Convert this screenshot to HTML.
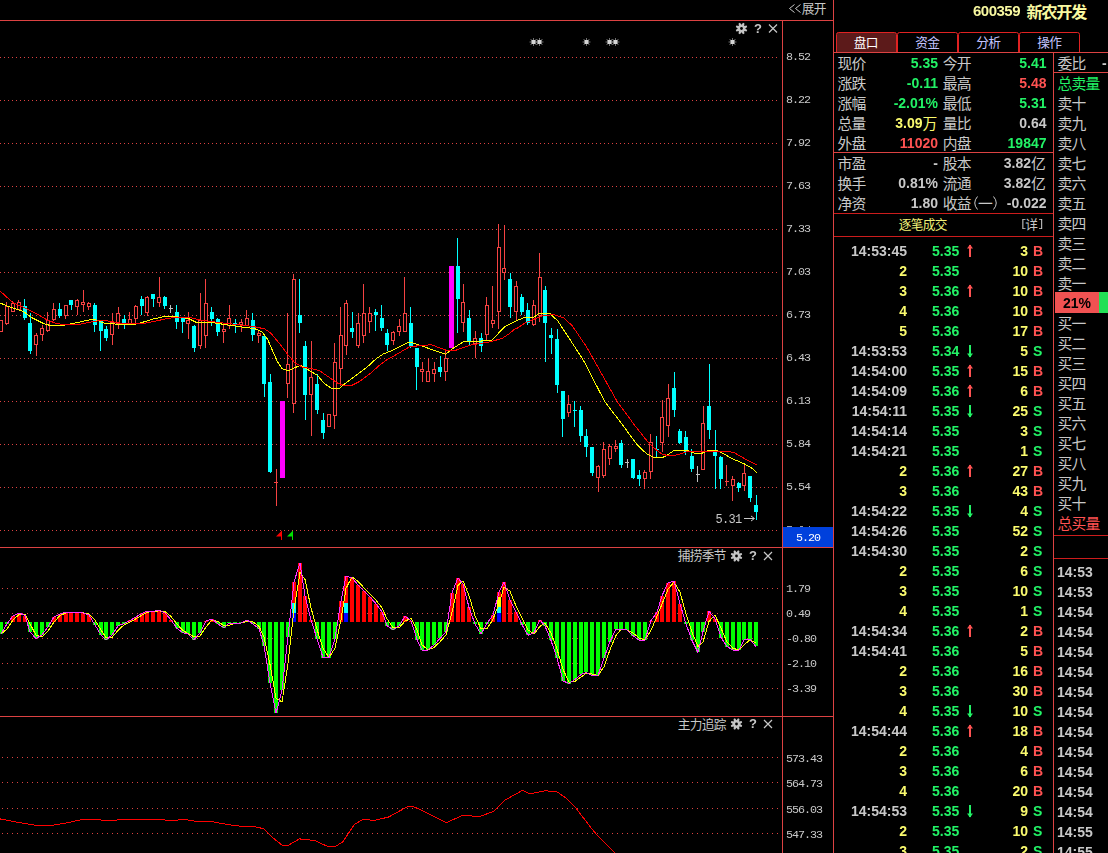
<!DOCTYPE html>
<html lang="zh"><head><meta charset="utf-8"><title>600359 新农开发</title>
<style>
html,body{margin:0;padding:0;background:#000;}
body{width:1108px;height:853px;overflow:hidden;position:relative;font-family:"Liberation Sans",sans-serif;}
#g{position:absolute;left:0;top:0;}
#g text{font-family:"Liberation Sans","Noto Sans CJK SC",sans-serif;}
.b{position:absolute;font:bold 14px/16px "Liberation Sans",sans-serif;white-space:nowrap;}
.m{position:absolute;font:11.7px/12px "Liberation Mono",monospace;letter-spacing:-1.02px;white-space:nowrap;color:#c8c8c8;}
#t{position:absolute;left:0;top:0;width:1108px;height:853px;will-change:transform;}
.r{text-align:right;}
.z{position:absolute;color:transparent;white-space:nowrap;overflow:hidden;font-family:"Liberation Sans",sans-serif;}
</style></head><body>
<svg id="g" width="1108" height="853" viewBox="0 0 1108 853">
<g shape-rendering="crispEdges">
<rect x="0" y="20" width="834" height="1" fill="#dc4242"/><rect x="782" y="20" width="1" height="833" fill="#dc4242"/><rect x="833" y="0" width="1" height="853" fill="#dc4242"/><rect x="0" y="547" width="834" height="1" fill="#dc4242"/><rect x="0" y="716" width="834" height="1" fill="#dc4242"/><rect x="833" y="52" width="275" height="1" fill="#dc4242"/><rect x="1053" y="52" width="1" height="801" fill="#dc4242"/><rect x="1053" y="72" width="55" height="1" fill="#dc4242"/><rect x="833" y="152" width="221" height="1" fill="#dc4242"/><rect x="834" y="213" width="219" height="1" fill="#cc1c1c"/><rect x="834" y="236" width="219" height="1" fill="#cc1c1c"/><rect x="1054" y="535" width="54" height="1" fill="#cc1c1c"/><rect x="1054" y="558" width="54" height="1" fill="#cc1c1c"/><path d="M0 57.5H777" stroke="#dc4242" stroke-width="1" stroke-dasharray="1 3" fill="none"/><path d="M0 100.5H777" stroke="#dc4242" stroke-width="1" stroke-dasharray="1 3" fill="none"/><path d="M0 143.5H777" stroke="#dc4242" stroke-width="1" stroke-dasharray="1 3" fill="none"/><path d="M0 186.5H777" stroke="#dc4242" stroke-width="1" stroke-dasharray="1 3" fill="none"/><path d="M0 229.5H777" stroke="#dc4242" stroke-width="1" stroke-dasharray="1 3" fill="none"/><path d="M0 272.5H777" stroke="#dc4242" stroke-width="1" stroke-dasharray="1 3" fill="none"/><path d="M0 315.5H777" stroke="#dc4242" stroke-width="1" stroke-dasharray="1 3" fill="none"/><path d="M0 358.5H777" stroke="#dc4242" stroke-width="1" stroke-dasharray="1 3" fill="none"/><path d="M0 401.5H777" stroke="#dc4242" stroke-width="1" stroke-dasharray="1 3" fill="none"/><path d="M0 444.5H777" stroke="#dc4242" stroke-width="1" stroke-dasharray="1 3" fill="none"/><path d="M0 487.5H777" stroke="#dc4242" stroke-width="1" stroke-dasharray="1 3" fill="none"/><path d="M0 530.5H777" stroke="#dc4242" stroke-width="1" stroke-dasharray="1 3" fill="none"/><path d="M2 588.5H778" stroke="#dc4242" stroke-width="1" stroke-dasharray="1 4" fill="none"/><path d="M2 613.5H778" stroke="#dc4242" stroke-width="1" stroke-dasharray="1 4" fill="none"/><path d="M2 638.5H778" stroke="#dc4242" stroke-width="1" stroke-dasharray="1 4" fill="none"/><path d="M2 663.5H778" stroke="#dc4242" stroke-width="1" stroke-dasharray="1 4" fill="none"/><path d="M2 688.5H778" stroke="#dc4242" stroke-width="1" stroke-dasharray="1 4" fill="none"/><path d="M2 757.5H778" stroke="#dc4242" stroke-width="1" stroke-dasharray="1 4" fill="none"/><path d="M2 782.5H778" stroke="#dc4242" stroke-width="1" stroke-dasharray="1 4" fill="none"/><path d="M2 808.5H778" stroke="#dc4242" stroke-width="1" stroke-dasharray="1 4" fill="none"/><path d="M2 833.5H778" stroke="#dc4242" stroke-width="1" stroke-dasharray="1 4" fill="none"/><rect x="-0.5" y="320.5" width="3" height="11" fill="#000" stroke="#f54242" stroke-width="1"/><rect x="6" y="302" width="1" height="4" fill="#f54242"/><rect x="6" y="323" width="1" height="2" fill="#f54242"/><rect x="5.5" y="306.5" width="3" height="17" fill="#000" stroke="#f54242" stroke-width="1"/><rect x="12" y="301" width="1" height="2" fill="#f54242"/><rect x="11.5" y="303.5" width="3" height="8" fill="#000" stroke="#f54242" stroke-width="1"/><rect x="18" y="300" width="1" height="2" fill="#f54242"/><rect x="17.5" y="302.5" width="3" height="7" fill="#000" stroke="#f54242" stroke-width="1"/><rect x="24" y="299" width="1" height="21" fill="#00ffff"/><rect x="23" y="306" width="4" height="12" fill="#00ffff"/><rect x="30" y="313" width="1" height="41" fill="#00ffff"/><rect x="28" y="323" width="4" height="28" fill="#00ffff"/><rect x="36" y="333" width="1" height="2" fill="#f54242"/><rect x="36" y="344" width="1" height="12" fill="#f54242"/><rect x="34.5" y="335.5" width="3" height="9" fill="#000" stroke="#f54242" stroke-width="1"/><rect x="42" y="325" width="1" height="3" fill="#f54242"/><rect x="42" y="334" width="1" height="7" fill="#f54242"/><rect x="40.5" y="328.5" width="3" height="6" fill="#000" stroke="#f54242" stroke-width="1"/><rect x="47" y="312" width="1" height="8" fill="#f54242"/><rect x="47" y="330" width="1" height="2" fill="#f54242"/><rect x="46.5" y="320.5" width="3" height="10" fill="#000" stroke="#f54242" stroke-width="1"/><rect x="53" y="303" width="1" height="6" fill="#f54242"/><rect x="53" y="319" width="1" height="2" fill="#f54242"/><rect x="52.5" y="309.5" width="3" height="10" fill="#000" stroke="#f54242" stroke-width="1"/><rect x="59" y="303" width="1" height="15" fill="#00ffff"/><rect x="58" y="309" width="4" height="7" fill="#00ffff"/><rect x="65" y="315" width="1" height="4" fill="#f54242"/><rect x="64.5" y="305.5" width="3" height="10" fill="#000" stroke="#f54242" stroke-width="1"/><rect x="71" y="300" width="1" height="10" fill="#00ffff"/><rect x="69" y="300" width="4" height="5" fill="#00ffff"/><rect x="77" y="299" width="1" height="1" fill="#f54242"/><rect x="77" y="306" width="1" height="9" fill="#f54242"/><rect x="75.5" y="300.5" width="3" height="6" fill="#000" stroke="#f54242" stroke-width="1"/><rect x="83" y="290" width="1" height="12" fill="#f54242"/><rect x="83" y="304" width="1" height="8" fill="#f54242"/><rect x="81.5" y="302.5" width="3" height="2" fill="#000" stroke="#f54242" stroke-width="1"/><rect x="88" y="302" width="1" height="1" fill="#f54242"/><rect x="88" y="306" width="1" height="4" fill="#f54242"/><rect x="87.5" y="303.5" width="3" height="3" fill="#000" stroke="#f54242" stroke-width="1"/><rect x="94" y="303" width="1" height="29" fill="#00ffff"/><rect x="93" y="305" width="4" height="20" fill="#00ffff"/><rect x="100" y="321" width="1" height="30" fill="#00ffff"/><rect x="99" y="321" width="4" height="10" fill="#00ffff"/><rect x="106" y="326" width="1" height="15" fill="#00ffff"/><rect x="104" y="329" width="4" height="9" fill="#00ffff"/><rect x="112" y="313" width="1" height="9" fill="#f54242"/><rect x="112" y="334" width="1" height="11" fill="#f54242"/><rect x="110.5" y="322.5" width="3" height="12" fill="#000" stroke="#f54242" stroke-width="1"/><rect x="118" y="307" width="1" height="6" fill="#f54242"/><rect x="118" y="323" width="1" height="6" fill="#f54242"/><rect x="116.5" y="313.5" width="3" height="10" fill="#000" stroke="#f54242" stroke-width="1"/><rect x="124" y="315" width="1" height="14" fill="#00ffff"/><rect x="122" y="319" width="4" height="6" fill="#00ffff"/><rect x="129" y="312" width="1" height="7" fill="#f54242"/><rect x="128.5" y="319.5" width="3" height="5" fill="#000" stroke="#f54242" stroke-width="1"/><rect x="135" y="305" width="1" height="1" fill="#f54242"/><rect x="135" y="318" width="1" height="7" fill="#f54242"/><rect x="134.5" y="306.5" width="3" height="12" fill="#000" stroke="#f54242" stroke-width="1"/><rect x="141" y="296" width="1" height="19" fill="#00ffff"/><rect x="140" y="299" width="4" height="7" fill="#00ffff"/><rect x="147" y="296" width="1" height="1" fill="#f54242"/><rect x="147" y="312" width="1" height="4" fill="#f54242"/><rect x="145.5" y="297.5" width="3" height="15" fill="#000" stroke="#f54242" stroke-width="1"/><rect x="153" y="294" width="1" height="13" fill="#00ffff"/><rect x="151" y="294" width="4" height="5" fill="#00ffff"/><rect x="159" y="277" width="1" height="20" fill="#f54242"/><rect x="159" y="302" width="1" height="5" fill="#f54242"/><rect x="157.5" y="297.5" width="3" height="5" fill="#000" stroke="#f54242" stroke-width="1"/><rect x="164" y="296" width="1" height="13" fill="#00ffff"/><rect x="163" y="297" width="4" height="9" fill="#00ffff"/><rect x="170" y="305" width="1" height="8" fill="#c0c0c0"/><rect x="169" y="308" width="4" height="1" fill="#c0c0c0"/><rect x="176" y="305" width="1" height="24" fill="#00ffff"/><rect x="175" y="312" width="4" height="10" fill="#00ffff"/><rect x="182" y="318" width="1" height="15" fill="#00ffff"/><rect x="181" y="318" width="4" height="4" fill="#00ffff"/><rect x="188" y="312" width="1" height="8" fill="#f54242"/><rect x="188" y="323" width="1" height="16" fill="#f54242"/><rect x="186.5" y="320.5" width="3" height="3" fill="#000" stroke="#f54242" stroke-width="1"/><rect x="194" y="325" width="1" height="27" fill="#00ffff"/><rect x="192" y="326" width="4" height="22" fill="#00ffff"/><rect x="200" y="293" width="1" height="27" fill="#f54242"/><rect x="200" y="345" width="1" height="4" fill="#f54242"/><rect x="198.5" y="320.5" width="3" height="25" fill="#000" stroke="#f54242" stroke-width="1"/><rect x="205" y="279" width="1" height="24" fill="#f54242"/><rect x="205" y="335" width="1" height="13" fill="#f54242"/><rect x="204.5" y="303.5" width="3" height="32" fill="#000" stroke="#f54242" stroke-width="1"/><rect x="211" y="307" width="1" height="19" fill="#00ffff"/><rect x="210" y="312" width="4" height="7" fill="#00ffff"/><rect x="217" y="318" width="1" height="18" fill="#00ffff"/><rect x="216" y="319" width="4" height="13" fill="#00ffff"/><rect x="223" y="324" width="1" height="5" fill="#f54242"/><rect x="223" y="331" width="1" height="12" fill="#f54242"/><rect x="222.5" y="329.5" width="3" height="2" fill="#000" stroke="#f54242" stroke-width="1"/><rect x="229" y="305" width="1" height="13" fill="#f54242"/><rect x="229" y="325" width="1" height="4" fill="#f54242"/><rect x="227.5" y="318.5" width="3" height="7" fill="#000" stroke="#f54242" stroke-width="1"/><rect x="235" y="319" width="1" height="14" fill="#00ffff"/><rect x="233" y="323" width="4" height="1" fill="#00ffff"/><rect x="241" y="319" width="1" height="3" fill="#f54242"/><rect x="241" y="324" width="1" height="8" fill="#f54242"/><rect x="239.5" y="322.5" width="3" height="2" fill="#000" stroke="#f54242" stroke-width="1"/><rect x="246" y="310" width="1" height="8" fill="#f54242"/><rect x="245.5" y="318.5" width="3" height="7" fill="#000" stroke="#f54242" stroke-width="1"/><rect x="252" y="313" width="1" height="28" fill="#00ffff"/><rect x="251" y="320" width="4" height="15" fill="#00ffff"/><rect x="258" y="331" width="1" height="2" fill="#f54242"/><rect x="258" y="335" width="1" height="8" fill="#f54242"/><rect x="257.5" y="333.5" width="3" height="2" fill="#000" stroke="#f54242" stroke-width="1"/><rect x="264" y="336" width="1" height="61" fill="#00ffff"/><rect x="262" y="336" width="4" height="48" fill="#00ffff"/><rect x="270" y="374" width="1" height="99" fill="#00ffff"/><rect x="268" y="382" width="4" height="90" fill="#00ffff"/><rect x="276" y="469" width="1" height="37" fill="#f54242"/><rect x="274" y="482" width="4" height="1" fill="#f54242"/><rect x="280" y="401" width="5" height="77" fill="#ff00ff"/><rect x="287" y="313" width="1" height="51" fill="#f54242"/><rect x="287" y="383" width="1" height="15" fill="#f54242"/><rect x="286.5" y="364.5" width="3" height="19" fill="#000" stroke="#f54242" stroke-width="1"/><rect x="293" y="274" width="1" height="5" fill="#f54242"/><rect x="293" y="403" width="1" height="10" fill="#f54242"/><rect x="292.5" y="279.5" width="3" height="124" fill="#000" stroke="#f54242" stroke-width="1"/><rect x="299" y="279" width="1" height="54" fill="#00ffff"/><rect x="298" y="315" width="4" height="8" fill="#00ffff"/><rect x="305" y="341" width="1" height="79" fill="#00ffff"/><rect x="303" y="346" width="4" height="49" fill="#00ffff"/><rect x="311" y="341" width="1" height="36" fill="#f54242"/><rect x="311" y="394" width="1" height="42" fill="#f54242"/><rect x="309.5" y="377.5" width="3" height="17" fill="#000" stroke="#f54242" stroke-width="1"/><rect x="317" y="374" width="1" height="40" fill="#00ffff"/><rect x="315" y="384" width="4" height="26" fill="#00ffff"/><rect x="323" y="413" width="1" height="26" fill="#00ffff"/><rect x="321" y="420" width="4" height="13" fill="#00ffff"/><rect x="327.5" y="414.5" width="3" height="12" fill="#000" stroke="#f54242" stroke-width="1"/><rect x="334" y="343" width="1" height="19" fill="#f54242"/><rect x="334" y="415" width="1" height="14" fill="#f54242"/><rect x="333.5" y="362.5" width="3" height="53" fill="#000" stroke="#f54242" stroke-width="1"/><rect x="340" y="307" width="1" height="28" fill="#f54242"/><rect x="340" y="368" width="1" height="18" fill="#f54242"/><rect x="339.5" y="335.5" width="3" height="33" fill="#000" stroke="#f54242" stroke-width="1"/><rect x="346" y="300" width="1" height="3" fill="#f54242"/><rect x="346" y="345" width="1" height="10" fill="#f54242"/><rect x="344.5" y="303.5" width="3" height="42" fill="#000" stroke="#f54242" stroke-width="1"/><rect x="352" y="312" width="1" height="26" fill="#00ffff"/><rect x="350" y="328" width="4" height="4" fill="#00ffff"/><rect x="358" y="313" width="1" height="10" fill="#f54242"/><rect x="358" y="345" width="1" height="3" fill="#f54242"/><rect x="356.5" y="323.5" width="3" height="22" fill="#000" stroke="#f54242" stroke-width="1"/><rect x="363" y="284" width="1" height="29" fill="#f54242"/><rect x="363" y="335" width="1" height="8" fill="#f54242"/><rect x="362.5" y="313.5" width="3" height="22" fill="#000" stroke="#f54242" stroke-width="1"/><rect x="369" y="307" width="1" height="6" fill="#f54242"/><rect x="369" y="321" width="1" height="12" fill="#f54242"/><rect x="368.5" y="313.5" width="3" height="8" fill="#000" stroke="#f54242" stroke-width="1"/><rect x="375" y="309" width="1" height="22" fill="#00ffff"/><rect x="374" y="312" width="4" height="3" fill="#00ffff"/><rect x="381" y="305" width="1" height="26" fill="#00ffff"/><rect x="380" y="318" width="4" height="10" fill="#00ffff"/><rect x="387" y="329" width="1" height="22" fill="#00ffff"/><rect x="385" y="333" width="4" height="12" fill="#00ffff"/><rect x="393" y="331" width="1" height="1" fill="#f54242"/><rect x="393" y="340" width="1" height="5" fill="#f54242"/><rect x="391.5" y="332.5" width="3" height="8" fill="#000" stroke="#f54242" stroke-width="1"/><rect x="399" y="319" width="1" height="7" fill="#f54242"/><rect x="399" y="331" width="1" height="5" fill="#f54242"/><rect x="397.5" y="326.5" width="3" height="5" fill="#000" stroke="#f54242" stroke-width="1"/><rect x="404" y="277" width="1" height="36" fill="#f54242"/><rect x="403.5" y="313.5" width="3" height="18" fill="#000" stroke="#f54242" stroke-width="1"/><rect x="410" y="307" width="1" height="41" fill="#00ffff"/><rect x="409" y="323" width="4" height="23" fill="#00ffff"/><rect x="416" y="348" width="1" height="42" fill="#00ffff"/><rect x="415" y="348" width="4" height="19" fill="#00ffff"/><rect x="422" y="362" width="1" height="7" fill="#f54242"/><rect x="422" y="371" width="1" height="11" fill="#f54242"/><rect x="420.5" y="369.5" width="3" height="2" fill="#000" stroke="#f54242" stroke-width="1"/><rect x="428" y="358" width="1" height="13" fill="#f54242"/><rect x="426.5" y="371.5" width="3" height="10" fill="#000" stroke="#f54242" stroke-width="1"/><rect x="434" y="362" width="1" height="7" fill="#f54242"/><rect x="434" y="373" width="1" height="9" fill="#f54242"/><rect x="432.5" y="369.5" width="3" height="4" fill="#000" stroke="#f54242" stroke-width="1"/><rect x="440" y="356" width="1" height="21" fill="#00ffff"/><rect x="438" y="367" width="4" height="5" fill="#00ffff"/><rect x="445" y="349" width="1" height="9" fill="#f54242"/><rect x="445" y="371" width="1" height="10" fill="#f54242"/><rect x="444.5" y="358.5" width="3" height="13" fill="#000" stroke="#f54242" stroke-width="1"/><rect x="449" y="266" width="5" height="82" fill="#ff00ff"/><rect x="457" y="238" width="1" height="95" fill="#00ffff"/><rect x="456" y="266" width="4" height="33" fill="#00ffff"/><rect x="463" y="284" width="1" height="18" fill="#f54242"/><rect x="463" y="322" width="1" height="10" fill="#f54242"/><rect x="461.5" y="302.5" width="3" height="20" fill="#000" stroke="#f54242" stroke-width="1"/><rect x="469" y="310" width="1" height="36" fill="#00ffff"/><rect x="467" y="318" width="4" height="23" fill="#00ffff"/><rect x="475" y="331" width="1" height="7" fill="#f54242"/><rect x="475" y="343" width="1" height="15" fill="#f54242"/><rect x="473.5" y="338.5" width="3" height="5" fill="#000" stroke="#f54242" stroke-width="1"/><rect x="481" y="333" width="1" height="19" fill="#00ffff"/><rect x="479" y="338" width="4" height="8" fill="#00ffff"/><rect x="486" y="297" width="1" height="8" fill="#f54242"/><rect x="486" y="334" width="1" height="6" fill="#f54242"/><rect x="485.5" y="305.5" width="3" height="29" fill="#000" stroke="#f54242" stroke-width="1"/><rect x="492" y="286" width="1" height="34" fill="#f54242"/><rect x="492" y="323" width="1" height="5" fill="#f54242"/><rect x="491.5" y="320.5" width="3" height="3" fill="#000" stroke="#f54242" stroke-width="1"/><rect x="498" y="224" width="1" height="23" fill="#f54242"/><rect x="498" y="311" width="1" height="18" fill="#f54242"/><rect x="497.5" y="247.5" width="3" height="64" fill="#000" stroke="#f54242" stroke-width="1"/><rect x="504" y="225" width="1" height="43" fill="#f54242"/><rect x="504" y="272" width="1" height="8" fill="#f54242"/><rect x="502.5" y="268.5" width="3" height="4" fill="#000" stroke="#f54242" stroke-width="1"/><rect x="510" y="273" width="1" height="45" fill="#00ffff"/><rect x="508" y="279" width="4" height="28" fill="#00ffff"/><rect x="516" y="281" width="1" height="5" fill="#f54242"/><rect x="516" y="311" width="1" height="9" fill="#f54242"/><rect x="514.5" y="286.5" width="3" height="25" fill="#000" stroke="#f54242" stroke-width="1"/><rect x="521" y="294" width="1" height="21" fill="#00ffff"/><rect x="520" y="297" width="4" height="15" fill="#00ffff"/><rect x="527" y="303" width="1" height="22" fill="#00ffff"/><rect x="526" y="310" width="4" height="13" fill="#00ffff"/><rect x="533" y="300" width="1" height="5" fill="#f54242"/><rect x="533" y="324" width="1" height="2" fill="#f54242"/><rect x="532.5" y="305.5" width="3" height="19" fill="#000" stroke="#f54242" stroke-width="1"/><rect x="539" y="253" width="1" height="24" fill="#f54242"/><rect x="539" y="315" width="1" height="7" fill="#f54242"/><rect x="538.5" y="277.5" width="3" height="38" fill="#000" stroke="#f54242" stroke-width="1"/><rect x="545" y="286" width="1" height="76" fill="#00ffff"/><rect x="543" y="290" width="4" height="33" fill="#00ffff"/><rect x="551" y="328" width="1" height="26" fill="#00ffff"/><rect x="549" y="335" width="4" height="3" fill="#00ffff"/><rect x="557" y="329" width="1" height="64" fill="#00ffff"/><rect x="555" y="339" width="4" height="46" fill="#00ffff"/><rect x="562" y="391" width="1" height="46" fill="#00ffff"/><rect x="561" y="391" width="4" height="28" fill="#00ffff"/><rect x="568" y="395" width="1" height="9" fill="#f54242"/><rect x="568" y="412" width="1" height="5" fill="#f54242"/><rect x="567.5" y="404.5" width="3" height="8" fill="#000" stroke="#f54242" stroke-width="1"/><rect x="574" y="401" width="1" height="26" fill="#00ffff"/><rect x="573" y="410" width="4" height="1" fill="#00ffff"/><rect x="580" y="406" width="1" height="36" fill="#00ffff"/><rect x="579" y="410" width="4" height="26" fill="#00ffff"/><rect x="586" y="429" width="1" height="28" fill="#00ffff"/><rect x="584" y="436" width="4" height="11" fill="#00ffff"/><rect x="592" y="447" width="1" height="29" fill="#00ffff"/><rect x="590" y="447" width="4" height="26" fill="#00ffff"/><rect x="598" y="465" width="1" height="1" fill="#f54242"/><rect x="598" y="477" width="1" height="15" fill="#f54242"/><rect x="596.5" y="466.5" width="3" height="11" fill="#000" stroke="#f54242" stroke-width="1"/><rect x="603" y="442" width="1" height="7" fill="#f54242"/><rect x="603" y="475" width="1" height="3" fill="#f54242"/><rect x="602.5" y="449.5" width="3" height="26" fill="#000" stroke="#f54242" stroke-width="1"/><rect x="609" y="444" width="1" height="2" fill="#f54242"/><rect x="609" y="458" width="1" height="7" fill="#f54242"/><rect x="608.5" y="446.5" width="3" height="12" fill="#000" stroke="#f54242" stroke-width="1"/><rect x="615" y="440" width="1" height="6" fill="#f54242"/><rect x="615" y="448" width="1" height="4" fill="#f54242"/><rect x="614.5" y="446.5" width="3" height="2" fill="#000" stroke="#f54242" stroke-width="1"/><rect x="621" y="440" width="1" height="28" fill="#00ffff"/><rect x="619" y="443" width="4" height="22" fill="#00ffff"/><rect x="627" y="459" width="1" height="9" fill="#c0c0c0"/><rect x="625" y="462" width="4" height="1" fill="#c0c0c0"/><rect x="633" y="459" width="1" height="20" fill="#00ffff"/><rect x="631" y="459" width="4" height="19" fill="#00ffff"/><rect x="639" y="470" width="1" height="16" fill="#00ffff"/><rect x="637" y="475" width="4" height="4" fill="#00ffff"/><rect x="644" y="470" width="1" height="2" fill="#f54242"/><rect x="644" y="478" width="1" height="11" fill="#f54242"/><rect x="643.5" y="472.5" width="3" height="6" fill="#000" stroke="#f54242" stroke-width="1"/><rect x="650" y="434" width="1" height="8" fill="#f54242"/><rect x="650" y="471" width="1" height="8" fill="#f54242"/><rect x="649.5" y="442.5" width="3" height="29" fill="#000" stroke="#f54242" stroke-width="1"/><rect x="656" y="436" width="1" height="22" fill="#00ffff"/><rect x="655" y="449" width="4" height="1" fill="#00ffff"/><rect x="662" y="400" width="1" height="17" fill="#f54242"/><rect x="662" y="442" width="1" height="10" fill="#f54242"/><rect x="660.5" y="417.5" width="3" height="25" fill="#000" stroke="#f54242" stroke-width="1"/><rect x="668" y="384" width="1" height="14" fill="#f54242"/><rect x="668" y="425" width="1" height="12" fill="#f54242"/><rect x="666.5" y="398.5" width="3" height="27" fill="#000" stroke="#f54242" stroke-width="1"/><rect x="674" y="372" width="1" height="45" fill="#00ffff"/><rect x="672" y="388" width="4" height="22" fill="#00ffff"/><rect x="679" y="429" width="1" height="15" fill="#00ffff"/><rect x="678" y="431" width="4" height="12" fill="#00ffff"/><rect x="685" y="431" width="1" height="24" fill="#00ffff"/><rect x="684" y="437" width="4" height="15" fill="#00ffff"/><rect x="691" y="449" width="1" height="23" fill="#00ffff"/><rect x="690" y="456" width="4" height="13" fill="#00ffff"/><rect x="697" y="466" width="1" height="16" fill="#c0c0c0"/><rect x="696" y="474" width="4" height="1" fill="#c0c0c0"/><rect x="703" y="406" width="1" height="17" fill="#f54242"/><rect x="701.5" y="423.5" width="3" height="46" fill="#000" stroke="#f54242" stroke-width="1"/><rect x="709" y="364" width="1" height="75" fill="#00ffff"/><rect x="707" y="406" width="4" height="24" fill="#00ffff"/><rect x="715" y="430" width="1" height="59" fill="#00ffff"/><rect x="713" y="452" width="4" height="4" fill="#00ffff"/><rect x="720" y="456" width="1" height="33" fill="#00ffff"/><rect x="719" y="457" width="4" height="22" fill="#00ffff"/><rect x="726" y="465" width="1" height="21" fill="#f54242"/><rect x="725" y="481" width="4" height="1" fill="#f54242"/><rect x="732" y="476" width="1" height="3" fill="#f54242"/><rect x="732" y="485" width="1" height="16" fill="#f54242"/><rect x="731.5" y="479.5" width="3" height="6" fill="#000" stroke="#f54242" stroke-width="1"/><rect x="738" y="482" width="1" height="10" fill="#00ffff"/><rect x="737" y="483" width="4" height="5" fill="#00ffff"/><rect x="744" y="465" width="1" height="8" fill="#f54242"/><rect x="744" y="485" width="1" height="6" fill="#f54242"/><rect x="742.5" y="473.5" width="3" height="12" fill="#000" stroke="#f54242" stroke-width="1"/><rect x="750" y="476" width="1" height="26" fill="#00ffff"/><rect x="748" y="476" width="4" height="22" fill="#00ffff"/><rect x="756" y="495" width="1" height="25" fill="#00ffff"/><rect x="754" y="505" width="4" height="7" fill="#00ffff"/><path d="M0.0 303.0 L7.5 306.1 L23.7 311.7 L31.1 317.3 L43.6 323.5 L51.1 325.8 L61.0 325.8 L69.7 324.1 L79.7 322.0 L89.7 319.8 L95.9 319.8 L103.4 322.9 L112.1 323.8 L124.5 324.8 L132.0 324.8 L138.7 323.5 L152.4 319.2 L163.6 316.7 L176.1 316.7 L188.5 318.5 L197.2 322.9 L214.7 322.9 L224.6 324.5 L242.1 327.0 L254.5 328.5 L262.5 332.3 L267.5 339.1 L272.4 350.3 L277.4 361.5 L281.8 368.4 L288.0 370.9 L294.9 367.7 L300.5 365.3 L304.8 367.7 L317.3 375.2 L324.7 383.9 L332.2 388.9 L339.7 388.3 L344.7 383.9 L354.6 376.5 L367.1 367.1 L375.8 359.0 L383.3 354.0 L393.0 350.1 L407.4 342.8 L411.8 342.6 L445.8 354.3 L452.2 348.8 L463.5 341.8 L472.2 341.8 L492.1 340.1 L504.6 326.7 L515.0 321.5 L516.3 320.8 L523.8 317.8 L534.0 317.1 L539.4 313.0 L550.3 313.0 L551.7 315.4 L557.8 320.8 L562.6 328.3 L571.0 341.1 L583.5 360.4 L604.7 401.5 L620.9 422.7 L637.3 445.0 L647.2 454.3 L654.7 457.8 L662.2 457.8 L667.2 455.0 L673.4 450.9 L679.6 450.1 L687.1 450.3 L695.8 453.8 L700.8 453.8 L708.3 450.3 L716.0 450.2 L722.2 453.0 L732.2 458.6 L743.4 463.5 L750.9 467.3 L757.1 473.1" stroke="#ffff00" stroke-width="1" fill="none" stroke-linejoin="round"/><path d="M0.0 290.9 L12.5 302.4 L24.9 308.0 L37.4 314.2 L47.3 320.0 L56.0 323.3 L62.3 324.5 L78.5 324.5 L89.7 322.3 L98.4 320.8 L107.1 320.8 L122.0 323.3 L138.0 323.8 L147.4 322.9 L167.4 318.5 L177.3 317.3 L189.8 317.3 L199.7 320.0 L217.2 322.3 L235.9 324.5 L252.0 326.3 L262.0 328.3 L265.0 329.1 L271.2 333.5 L279.9 344.1 L287.4 354.0 L294.9 362.8 L302.3 367.1 L312.3 368.7 L319.8 370.9 L329.7 377.7 L337.2 382.9 L344.7 385.8 L352.1 385.2 L359.6 381.4 L369.6 374.0 L379.5 365.3 L387.0 359.7 L393.0 356.5 L409.9 346.6 L431.1 344.7 L445.8 350.1 L454.7 350.6 L472.2 344.7 L488.4 342.2 L502.1 338.5 L509.5 333.5 L515.0 328.9 L517.0 328.3 L525.2 322.9 L532.6 319.8 L539.4 317.1 L542.8 315.7 L549.0 315.7 L550.3 314.7 L554.4 314.7 L559.8 316.8 L563.9 317.8 L572.0 325.6 L574.8 329.5 L586.0 346.1 L593.5 359.2 L617.1 401.5 L634.6 425.2 L648.5 442.8 L654.7 448.5 L662.2 454.3 L669.6 455.9 L678.4 454.7 L687.1 451.6 L713.0 451.6 L730.9 452.0 L734.7 453.0 L744.6 458.6 L757.1 465.2" stroke="#ff0000" stroke-width="1" fill="none" stroke-linejoin="round"/><rect x="281" y="531" width="1" height="9" fill="#ff0000"/><rect x="292" y="531" width="1" height="9" fill="#00e000"/><rect x="-1" y="622" width="4" height="12" fill="#00ff00"/><rect x="5" y="622" width="4" height="2" fill="#00ff00"/><rect x="11" y="616" width="4" height="6" fill="#ff0000"/><rect x="17" y="613" width="4" height="9" fill="#ff0000"/><rect x="23" y="616" width="4" height="6" fill="#ff0000"/><rect x="28" y="622" width="4" height="10" fill="#00ff00"/><rect x="34" y="622" width="4" height="16" fill="#00ff00"/><rect x="40" y="622" width="4" height="13" fill="#00ff00"/><rect x="46" y="622" width="4" height="5" fill="#00ff00"/><rect x="52" y="617" width="4" height="5" fill="#ff0000"/><rect x="58" y="614" width="4" height="8" fill="#ff0000"/><rect x="64" y="612" width="4" height="10" fill="#ff0000"/><rect x="69" y="612" width="4" height="10" fill="#ff0000"/><rect x="75" y="612" width="4" height="10" fill="#ff0000"/><rect x="81" y="613" width="4" height="9" fill="#ff0000"/><rect x="87" y="615" width="4" height="7" fill="#ff0000"/><rect x="93" y="622" width="4" height="3" fill="#00ff00"/><rect x="99" y="622" width="4" height="13" fill="#00ff00"/><rect x="104" y="622" width="4" height="18" fill="#00ff00"/><rect x="110" y="622" width="4" height="13" fill="#00ff00"/><rect x="116" y="622" width="4" height="4" fill="#00ff00"/><rect x="122" y="622" width="4" height="2" fill="#00ff00"/><rect x="128" y="620" width="4" height="2" fill="#ff0000"/><rect x="134" y="617" width="4" height="5" fill="#ff0000"/><rect x="140" y="613" width="4" height="9" fill="#ff0000"/><rect x="145" y="611" width="4" height="11" fill="#ff0000"/><rect x="151" y="612" width="4" height="10" fill="#ff0000"/><rect x="157" y="610" width="4" height="12" fill="#ff0000"/><rect x="163" y="613" width="4" height="9" fill="#ff0000"/><rect x="169" y="620" width="4" height="2" fill="#ff0000"/><rect x="175" y="622" width="4" height="6" fill="#00ff00"/><rect x="181" y="622" width="4" height="11" fill="#00ff00"/><rect x="186" y="622" width="4" height="12" fill="#00ff00"/><rect x="192" y="622" width="4" height="18" fill="#00ff00"/><rect x="198" y="622" width="4" height="11" fill="#00ff00"/><rect x="204" y="621" width="4" height="1" fill="#ff0000"/><rect x="210" y="619" width="4" height="3" fill="#ff0000"/><rect x="216" y="622" width="4" height="2" fill="#00ff00"/><rect x="222" y="622" width="4" height="6" fill="#00ff00"/><rect x="227" y="622" width="4" height="1" fill="#00ff00"/><rect x="233" y="622" width="4" height="1" fill="#00ff00"/><rect x="239" y="622" width="4" height="1" fill="#00ff00"/><rect x="245" y="620" width="4" height="2" fill="#ff0000"/><rect x="251" y="622" width="4" height="2" fill="#00ff00"/><rect x="257" y="622" width="4" height="7" fill="#00ff00"/><rect x="262" y="622" width="4" height="24" fill="#00ff00"/><rect x="268" y="622" width="4" height="61" fill="#00ff00"/><rect x="274" y="622" width="4" height="91" fill="#00ff00"/><rect x="280" y="622" width="4" height="68" fill="#00ff00"/><rect x="286" y="622" width="4" height="15" fill="#00ff00"/><rect x="292" y="613" width="4" height="9" fill="#0000ff"/><rect x="292" y="603" width="4" height="10" fill="#00ffff"/><rect x="292" y="582" width="4" height="21" fill="#ff0000"/><rect x="298" y="563" width="4" height="59" fill="#ff0000"/><rect x="303" y="596" width="4" height="26" fill="#ff0000"/><rect x="309" y="620" width="4" height="2" fill="#ff0000"/><rect x="315" y="622" width="4" height="17" fill="#00ff00"/><rect x="321" y="622" width="4" height="36" fill="#00ff00"/><rect x="327" y="622" width="4" height="36" fill="#00ff00"/><rect x="333" y="622" width="4" height="17" fill="#00ff00"/><rect x="339" y="601" width="4" height="21" fill="#ff0000"/><rect x="344" y="613" width="4" height="9" fill="#0000ff"/><rect x="344" y="603" width="4" height="10" fill="#00ffff"/><rect x="344" y="576" width="4" height="27" fill="#ff0000"/><rect x="350" y="578" width="4" height="44" fill="#ff0000"/><rect x="356" y="585" width="4" height="37" fill="#ff0000"/><rect x="362" y="591" width="4" height="31" fill="#ff0000"/><rect x="368" y="597" width="4" height="25" fill="#ff0000"/><rect x="374" y="604" width="4" height="18" fill="#ff0000"/><rect x="380" y="612" width="4" height="10" fill="#ff0000"/><rect x="385" y="622" width="4" height="4" fill="#00ff00"/><rect x="391" y="622" width="4" height="8" fill="#00ff00"/><rect x="397" y="622" width="4" height="4" fill="#00ff00"/><rect x="403" y="616" width="4" height="6" fill="#ff0000"/><rect x="409" y="621" width="4" height="1" fill="#ff0000"/><rect x="415" y="622" width="4" height="18" fill="#00ff00"/><rect x="420" y="622" width="4" height="28" fill="#00ff00"/><rect x="426" y="622" width="4" height="28" fill="#00ff00"/><rect x="432" y="622" width="4" height="23" fill="#00ff00"/><rect x="438" y="622" width="4" height="16" fill="#00ff00"/><rect x="444" y="622" width="4" height="10" fill="#00ff00"/><rect x="450" y="593" width="4" height="29" fill="#ff0000"/><rect x="456" y="578" width="4" height="44" fill="#ff0000"/><rect x="461" y="584" width="4" height="38" fill="#ff0000"/><rect x="467" y="607" width="4" height="15" fill="#ff0000"/><rect x="473" y="622" width="4" height="2" fill="#00ff00"/><rect x="479" y="622" width="4" height="12" fill="#00ff00"/><rect x="485" y="622" width="4" height="2" fill="#00ff00"/><rect x="491" y="615" width="4" height="7" fill="#ff0000"/><rect x="497" y="613" width="4" height="9" fill="#0000ff"/><rect x="497" y="607" width="4" height="6" fill="#00ffff"/><rect x="497" y="597" width="4" height="10" fill="#ffff00"/><rect x="497" y="592" width="4" height="5" fill="#ff0000"/><rect x="502" y="582" width="4" height="40" fill="#ff0000"/><rect x="508" y="600" width="4" height="22" fill="#ff0000"/><rect x="514" y="612" width="4" height="10" fill="#ff0000"/><rect x="520" y="622" width="4" height="3" fill="#00ff00"/><rect x="526" y="622" width="4" height="13" fill="#00ff00"/><rect x="532" y="622" width="4" height="11" fill="#00ff00"/><rect x="538" y="620" width="4" height="2" fill="#ff0000"/><rect x="543" y="622" width="4" height="4" fill="#00ff00"/><rect x="549" y="622" width="4" height="18" fill="#00ff00"/><rect x="555" y="622" width="4" height="36" fill="#00ff00"/><rect x="561" y="622" width="4" height="59" fill="#00ff00"/><rect x="567" y="622" width="4" height="62" fill="#00ff00"/><rect x="573" y="622" width="4" height="58" fill="#00ff00"/><rect x="579" y="622" width="4" height="52" fill="#00ff00"/><rect x="584" y="622" width="4" height="50" fill="#00ff00"/><rect x="590" y="622" width="4" height="53" fill="#00ff00"/><rect x="596" y="622" width="4" height="53" fill="#00ff00"/><rect x="602" y="622" width="4" height="36" fill="#00ff00"/><rect x="608" y="622" width="4" height="20" fill="#00ff00"/><rect x="614" y="622" width="4" height="7" fill="#00ff00"/><rect x="619" y="622" width="4" height="8" fill="#00ff00"/><rect x="625" y="622" width="4" height="8" fill="#00ff00"/><rect x="631" y="622" width="4" height="14" fill="#00ff00"/><rect x="637" y="622" width="4" height="18" fill="#00ff00"/><rect x="643" y="622" width="4" height="18" fill="#00ff00"/><rect x="649" y="621" width="4" height="1" fill="#ff0000"/><rect x="655" y="612" width="4" height="10" fill="#ff0000"/><rect x="660" y="596" width="4" height="26" fill="#ff0000"/><rect x="666" y="583" width="4" height="39" fill="#ff0000"/><rect x="672" y="581" width="4" height="41" fill="#ff0000"/><rect x="678" y="604" width="4" height="18" fill="#ff0000"/><rect x="684" y="622" width="4" height="2" fill="#00ff00"/><rect x="690" y="622" width="4" height="18" fill="#00ff00"/><rect x="696" y="622" width="4" height="30" fill="#00ff00"/><rect x="701" y="622" width="4" height="10" fill="#00ff00"/><rect x="707" y="611" width="4" height="11" fill="#ff0000"/><rect x="713" y="619" width="4" height="3" fill="#ff0000"/><rect x="719" y="622" width="4" height="16" fill="#00ff00"/><rect x="725" y="622" width="4" height="25" fill="#00ff00"/><rect x="731" y="622" width="4" height="28" fill="#00ff00"/><rect x="737" y="622" width="4" height="28" fill="#00ff00"/><rect x="742" y="622" width="4" height="18" fill="#00ff00"/><rect x="748" y="622" width="4" height="18" fill="#00ff00"/><rect x="754" y="622" width="4" height="24" fill="#00ff00"/><path d="M1.0 634.0 L7.0 629.0 L13.0 620.0 L19.0 614.5 L25.0 614.2 L30.0 623.8 L36.0 635.2 L42.0 636.8 L48.0 631.0 L54.0 622.0 L60.0 615.5 L66.0 613.0 L71.0 612.0 L77.0 612.2 L83.0 612.7 L89.0 614.0 L95.0 620.0 L101.0 630.0 L106.0 637.5 L112.0 637.5 L118.0 630.5 L124.0 624.8 L130.0 622.0 L136.0 618.8 L142.0 615.1 L147.0 612.3 L153.0 611.5 L159.0 610.9 L165.0 611.5 L171.0 616.4 L177.0 624.1 L183.0 630.6 L188.0 633.4 L194.0 636.9 L200.0 636.2 L206.0 626.9 L212.0 620.0 L218.0 621.5 L224.0 625.9 L229.0 625.4 L235.0 623.0 L241.0 623.0 L247.0 621.5 L253.0 622.0 L259.0 626.3 L264.0 637.2 L270.0 664.4 L276.0 698.2 L282.0 702.0 L288.0 663.6 L294.0 609.3 L300.0 572.5 L305.0 579.4 L311.0 607.9 L317.0 629.4 L323.0 648.2 L329.0 657.6 L335.0 648.2 L341.0 619.8 L346.0 588.3 L352.0 576.9 L358.0 581.4 L364.0 587.8 L370.0 593.8 L376.0 600.3 L382.0 607.8 L387.0 618.8 L393.0 627.7 L399.0 627.9 L405.0 621.1 L411.0 618.4 L417.0 630.0 L422.0 644.8 L428.0 650.0 L434.0 647.5 L440.0 641.8 L446.0 635.0 L452.0 612.2 L458.0 585.3 L463.0 580.9 L469.0 595.6 L475.0 615.7 L481.0 629.0 L487.0 628.8 L493.0 619.2 L499.0 603.5 L504.0 587.2 L510.0 591.2 L516.0 606.0 L522.0 618.2 L528.0 629.9 L534.0 633.9 L540.0 626.3 L545.0 623.0 L551.0 633.2 L557.0 649.0 L563.0 669.3 L569.0 682.2 L575.0 681.5 L581.0 677.0 L586.0 673.5 L592.0 674.0 L598.0 675.4 L604.0 666.7 L610.0 649.8 L616.0 635.4 L621.0 629.5 L627.0 629.9 L633.0 632.9 L639.0 637.9 L645.0 640.0 L651.0 630.3 L657.0 616.4 L662.0 604.0 L668.0 589.3 L674.0 581.9 L680.0 592.3 L686.0 613.9 L692.0 632.2 L698.0 646.5 L703.0 642.0 L709.0 621.5 L715.0 615.0 L721.0 628.1 L727.0 642.0 L733.0 648.3 L739.0 650.0 L744.0 645.0 L750.0 639.8 L756.0 643.0" stroke="#ffff00" stroke-width="1" fill="none" stroke-linejoin="round"/><path d="M1.0 634.0 L7.0 624.0 L13.0 616.0 L19.0 613.0 L25.0 615.5 L30.0 632.0 L36.0 638.5 L42.0 635.0 L48.0 627.0 L54.0 617.0 L60.0 614.0 L66.0 612.0 L71.0 612.0 L77.0 612.4 L83.0 613.0 L89.0 615.0 L95.0 625.0 L101.0 635.0 L106.0 640.0 L112.0 635.0 L118.0 626.0 L124.0 623.5 L130.0 620.5 L136.0 617.0 L142.0 613.3 L147.0 611.3 L153.0 611.7 L159.0 610.0 L165.0 613.0 L171.0 619.8 L177.0 628.5 L183.0 632.8 L188.0 634.0 L194.0 639.7 L200.0 632.8 L206.0 621.0 L212.0 619.0 L218.0 624.0 L224.0 627.8 L229.0 623.0 L235.0 623.0 L241.0 623.0 L247.0 620.0 L253.0 624.0 L259.0 628.6 L264.0 645.7 L270.0 683.0 L276.0 713.4 L282.0 690.5 L288.0 636.7 L294.0 581.9 L300.0 563.0 L305.0 595.8 L311.0 620.0 L317.0 638.7 L323.0 657.6 L329.0 657.6 L335.0 638.7 L341.0 600.8 L346.0 575.9 L352.0 577.9 L358.0 584.9 L364.0 590.8 L370.0 596.8 L376.0 603.8 L382.0 611.8 L387.0 625.7 L393.0 629.7 L399.0 626.0 L405.0 616.2 L411.0 620.6 L417.0 639.5 L422.0 650.0 L428.0 650.0 L434.0 645.0 L440.0 638.5 L446.0 631.6 L452.0 592.8 L458.0 577.9 L463.0 583.9 L469.0 607.4 L475.0 624.0 L481.0 634.0 L487.0 623.6 L493.0 614.8 L499.0 592.2 L504.0 582.3 L510.0 600.2 L516.0 611.8 L522.0 624.6 L528.0 635.2 L534.0 632.6 L540.0 620.0 L545.0 626.0 L551.0 640.5 L557.0 657.6 L563.0 681.0 L569.0 683.5 L575.0 679.5 L581.0 674.5 L586.0 672.5 L592.0 675.4 L598.0 675.4 L604.0 658.0 L610.0 641.6 L616.0 629.2 L621.0 629.7 L627.0 630.0 L633.0 635.7 L639.0 640.0 L645.0 640.0 L651.0 620.6 L657.0 612.2 L662.0 595.8 L668.0 582.9 L674.0 580.9 L680.0 603.8 L686.0 624.0 L692.0 640.5 L698.0 652.5 L703.0 631.6 L709.0 611.4 L715.0 618.7 L721.0 637.5 L727.0 646.6 L733.0 650.0 L739.0 650.0 L744.0 640.0 L750.0 639.5 L756.0 646.5" stroke="#ff30ff" stroke-width="1" fill="none" stroke-linejoin="round"/><path d="M0.0 818.9 L15.2 821.9 L37.9 825.7 L49.3 825.7 L64.4 823.4 L79.6 820.0 L91.0 819.6 L110.0 820.4 L125.0 819.6 L159.2 819.6 L170.6 820.4 L185.7 819.6 L197.1 821.5 L208.5 821.1 L227.4 824.5 L242.6 826.5 L254.0 826.5 L263.5 828.7 L272.9 837.8 L282.4 845.4 L288.1 845.4 L299.5 838.9 L314.6 840.5 L327.9 846.5 L335.5 846.5 L343.0 841.6 L354.4 824.5 L363.9 818.9 L373.4 820.7 L388.6 817.0 L407.5 806.7 L413.2 806.7 L420.0 809.4 L446.5 822.6 L461.7 815.8 L480.7 816.2 L493.9 811.3 L505.3 799.9 L522.4 790.4 L529.9 793.8 L545.1 790.8 L556.5 791.5 L566.0 798.0 L575.4 807.5 L594.4 832.1 L613.3 851.1 L616.0 854.5" stroke="#ff0000" stroke-width="1" fill="none" stroke-linejoin="round"/><rect x="783" y="527" width="50" height="20" fill="#0040dc"/><rect x="787" y="526" width="5" height="1" fill="#a0a0a0"/><rect x="800" y="526" width="3" height="1" fill="#a0a0a0"/><rect x="809" y="526" width="1" height="1" fill="#a0a0a0"/><rect x="1055" y="292" width="44" height="21" fill="#f05252"/><rect x="1099" y="292" width="9" height="21" fill="#22e055"/><rect x="969" y="245" width="2" height="12" fill="#ff5252"/><rect x="969" y="285" width="2" height="12" fill="#ff5252"/><rect x="969" y="345" width="2" height="12" fill="#22f266"/><rect x="969" y="365" width="2" height="12" fill="#ff5252"/><rect x="969" y="385" width="2" height="12" fill="#ff5252"/><rect x="969" y="405" width="2" height="12" fill="#22f266"/><rect x="969" y="465" width="2" height="12" fill="#ff5252"/><rect x="969" y="505" width="2" height="12" fill="#22f266"/><rect x="969" y="625" width="2" height="12" fill="#ff5252"/><rect x="969" y="705" width="2" height="12" fill="#22f266"/><rect x="969" y="725" width="2" height="12" fill="#ff5252"/><rect x="969" y="805" width="2" height="12" fill="#22f266"/>
</g>
<g>
<path d="M282 530.5 L276 536.5 L282 536.5Z" fill="#ff0000"/><path d="M293 530.5 L287 536.5 L293 536.5Z" fill="#00e000"/><g stroke="#c8c8c8" stroke-width="1" opacity="0.55"><path d="M529.5 42H537.5M533.5 38V46M530.5 39L536.5 45M530.5 45L536.5 39"/></g><rect x="531.5" y="40" width="4" height="4" fill="#d4d4d4"/><g stroke="#c8c8c8" stroke-width="1" opacity="0.55"><path d="M535.5 42H543.5M539.5 38V46M536.5 39L542.5 45M536.5 45L542.5 39"/></g><rect x="537.5" y="40" width="4" height="4" fill="#d4d4d4"/><g stroke="#c8c8c8" stroke-width="1" opacity="0.55"><path d="M582.5 42H590.5M586.5 38V46M583.5 39L589.5 45M583.5 45L589.5 39"/></g><rect x="584.5" y="40" width="4" height="4" fill="#d4d4d4"/><g stroke="#c8c8c8" stroke-width="1" opacity="0.55"><path d="M605.5 42H613.5M609.5 38V46M606.5 39L612.5 45M606.5 45L612.5 39"/></g><rect x="607.5" y="40" width="4" height="4" fill="#d4d4d4"/><g stroke="#c8c8c8" stroke-width="1" opacity="0.55"><path d="M611.5 42H619.5M615.5 38V46M612.5 39L618.5 45M612.5 45L618.5 39"/></g><rect x="613.5" y="40" width="4" height="4" fill="#d4d4d4"/><g stroke="#c8c8c8" stroke-width="1" opacity="0.55"><path d="M728.5 42H736.5M732.5 38V46M729.5 39L735.5 45M729.5 45L735.5 39"/></g><rect x="730.5" y="40" width="4" height="4" fill="#d4d4d4"/><path d="M794.5 4.5L789.5 8.5L794.5 12.5M800.5 4.5L795.5 8.5L800.5 12.5" stroke="#c8c8c8" stroke-width="1" fill="none"/><text x="801.64 813.64" y="12.82" font-size="12.7" fill="#c8c8c8">展开</text><g transform="translate(741.5 28.5)"><path d="M3.70 0.00 L5.70 1.53 L5.11 2.95 L2.62 2.62 L2.95 5.11 L1.53 5.70 L0.00 3.70 L-1.53 5.70 L-2.95 5.11 L-2.62 2.62 L-5.11 2.95 L-5.70 1.53 L-3.70 0.00 L-5.70 -1.53 L-5.11 -2.95 L-2.62 -2.62 L-2.95 -5.11 L-1.53 -5.70 L-0.00 -3.70 L1.53 -5.70 L2.95 -5.11 L2.62 -2.62 L5.11 -2.95 L5.70 -1.53Z" fill="#c4c4c4"/><circle r="1.4" fill="#000"/></g><path d="M769 24.5L777 32.5M777 24.5L769 32.5" stroke="#c8c8c8" stroke-width="1.2" fill="none"/><g transform="translate(736.5 556)"><path d="M3.70 0.00 L5.70 1.53 L5.11 2.95 L2.62 2.62 L2.95 5.11 L1.53 5.70 L0.00 3.70 L-1.53 5.70 L-2.95 5.11 L-2.62 2.62 L-5.11 2.95 L-5.70 1.53 L-3.70 0.00 L-5.70 -1.53 L-5.11 -2.95 L-2.62 -2.62 L-2.95 -5.11 L-1.53 -5.70 L-0.00 -3.70 L1.53 -5.70 L2.95 -5.11 L2.62 -2.62 L5.11 -2.95 L5.70 -1.53Z" fill="#c4c4c4"/><circle r="1.4" fill="#000"/></g><path d="M764 552L772 560M772 552L764 560" stroke="#c8c8c8" stroke-width="1.2" fill="none"/><g transform="translate(736.5 724)"><path d="M3.70 0.00 L5.70 1.53 L5.11 2.95 L2.62 2.62 L2.95 5.11 L1.53 5.70 L0.00 3.70 L-1.53 5.70 L-2.95 5.11 L-2.62 2.62 L-5.11 2.95 L-5.70 1.53 L-3.70 0.00 L-5.70 -1.53 L-5.11 -2.95 L-2.62 -2.62 L-2.95 -5.11 L-1.53 -5.70 L-0.00 -3.70 L1.53 -5.70 L2.95 -5.11 L2.62 -2.62 L5.11 -2.95 L5.70 -1.53Z" fill="#c4c4c4"/><circle r="1.4" fill="#000"/></g><path d="M764 720L772 728M772 720L764 728" stroke="#c8c8c8" stroke-width="1.2" fill="none"/><text x="677.64 689.64 701.64 713.64" y="559.82" font-size="12.7" fill="#c8c8c8">捕捞季节</text><text x="677.64 689.64 701.64 713.64" y="729.32" font-size="12.7" fill="#c8c8c8">主力追踪</text><path d="M744 518.5H754M751 516L754.5 518.5L751 521" stroke="#c8c8c8" stroke-width="1" fill="none"/><text x="1026.54 1041.34 1056.14 1070.94" y="17.68" font-size="16.3" font-weight="bold" fill="#f8f8a0">新农开发</text><path d="M836.5 52V34.5Q836.5 32.5 838.5 32.5H894.5Q896.5 32.5 896.5 34.5V52" fill="#5c1a1a" stroke="#e02222" stroke-width="1"/><path d="M897.5 52V34.5Q897.5 32.5 899.5 32.5H955.5Q957.5 32.5 957.5 34.5V52" fill="none" stroke="#e02222" stroke-width="1"/><path d="M958.5 52V34.5Q958.5 32.5 960.5 32.5H1016.5Q1018.5 32.5 1018.5 34.5V52" fill="none" stroke="#e02222" stroke-width="1"/><path d="M1019.5 52V34.5Q1019.5 32.5 1021.5 32.5H1077.5Q1079.5 32.5 1079.5 34.5V52" fill="none" stroke="#e02222" stroke-width="1"/><text x="853.64 865.64" y="46.82" font-size="12.7" fill="#ffffff">盘口</text><text x="915.14 927.14" y="46.82" font-size="12.7" fill="#c4c4ff">资金</text><text x="976.14 988.14" y="46.82" font-size="12.7" fill="#c4c4ff">分析</text><text x="1037.14 1049.14" y="46.82" font-size="12.7" fill="#c4c4ff">操作</text>
<g font-size="14.8" fill="#c8c8c8">
<text x="837.58 851.58" y="68.6">现价</text><text x="942.78 956.78" y="68.6">今开</text>
<text x="837.58 851.58" y="88.6">涨跌</text><text x="942.78 956.78" y="88.6">最高</text>
<text x="837.58 851.58" y="108.6">涨幅</text><text x="942.78 956.78" y="108.6">最低</text>
<text x="837.58 851.58" y="128.6">总量</text><text x="922.58" y="128.6" fill="#fafa6e">万</text><text x="942.78 956.78" y="128.6">量比</text>
<text x="837.58 851.58" y="148.6">外盘</text><text x="942.78 956.78" y="148.6">内盘</text>
<text x="837.58 851.58" y="168.6">市盈</text><text x="942.78 956.78" y="168.6">股本</text><text x="1031.08" y="168.6">亿</text>
<text x="837.58 851.58" y="188.6">换手</text><text x="942.78 956.78" y="188.6">流通</text><text x="1031.08" y="188.6">亿</text>
<text x="837.58 851.58" y="208.6">净资</text><text x="942.78 956.78" y="208.6">收益</text>
</g>
<path d="M977.5 196.5Q972 203 977.5 209.5M993.5 196.5Q999 203 993.5 209.5" stroke="#c8c8c8" stroke-width="1" fill="none"/>
<g font-size="14.8" fill="#c8c8c8">
<text x="978.08" y="208.6">一</text>
<text x="1057.58 1071.58" y="68.6">委比</text>
<text x="1057.58 1071.58 1085.58" y="88.6" fill="#22f266">总卖量</text>
<text x="1057.58 1071.58" y="108.6">卖十</text>
<text x="1057.58 1071.58" y="128.6">卖九</text>
<text x="1057.58 1071.58" y="148.6">卖八</text>
<text x="1057.58 1071.58" y="168.6">卖七</text>
<text x="1057.58 1071.58" y="188.6">卖六</text>
<text x="1057.58 1071.58" y="208.6">卖五</text>
<text x="1057.58 1071.58" y="228.6">卖四</text>
<text x="1057.58 1071.58" y="248.6">卖三</text>
<text x="1057.58 1071.58" y="268.6">卖二</text>
<text x="1057.58 1071.58" y="288.6">卖一</text>
<text x="1057.58 1071.58" y="328.6">买一</text>
<text x="1057.58 1071.58" y="348.6">买二</text>
<text x="1057.58 1071.58" y="368.6">买三</text>
<text x="1057.58 1071.58" y="388.6">买四</text>
<text x="1057.58 1071.58" y="408.6">买五</text>
<text x="1057.58 1071.58" y="428.6">买六</text>
<text x="1057.58 1071.58" y="448.6">买七</text>
<text x="1057.58 1071.58" y="468.6">买八</text>
<text x="1057.58 1071.58" y="488.6">买九</text>
<text x="1057.58 1071.58" y="508.6">买十</text>
<text x="1057.58 1071.58 1085.58" y="528.6" fill="#ff5252">总买量</text>
</g>
<text x="898.64 910.64 922.64 934.64" y="228.82" font-size="12.7" fill="#f0f078">逐笔成交</text><text x="1025.14" y="228.82" font-size="12.7" fill="#c8c8c8">详</text><path d="M967 248.5L970 244.5L973 248.5Z" fill="#ff5252"/><path d="M967 288.5L970 284.5L973 288.5Z" fill="#ff5252"/><path d="M967 353.5L970 357.5L973 353.5Z" fill="#22f266"/><path d="M967 368.5L970 364.5L973 368.5Z" fill="#ff5252"/><path d="M967 388.5L970 384.5L973 388.5Z" fill="#ff5252"/><path d="M967 413.5L970 417.5L973 413.5Z" fill="#22f266"/><path d="M967 468.5L970 464.5L973 468.5Z" fill="#ff5252"/><path d="M967 513.5L970 517.5L973 513.5Z" fill="#22f266"/><path d="M967 628.5L970 624.5L973 628.5Z" fill="#ff5252"/><path d="M967 713.5L970 717.5L973 713.5Z" fill="#22f266"/><path d="M967 728.5L970 724.5L973 728.5Z" fill="#ff5252"/><path d="M967 813.5L970 817.5L973 813.5Z" fill="#22f266"/>
</g>
</svg>
<div id="t">
<span class="z" style="left:789px;top:2px;font-size:12px;line-height:12px;width:12px;height:12px">&lt;&lt;</span>
<span class="z" style="left:802px;top:2px;font-size:12px;line-height:12px;width:24px;height:12px">展开</span>
<div class="b" style="left:754px;top:20.5px;color:#c8c8c8;font-size:13px;font-weight:bold">?</div>
<div class="b" style="left:749px;top:548px;color:#c8c8c8;font-size:13px;font-weight:bold">?</div>
<div class="b" style="left:749px;top:716px;color:#c8c8c8;font-size:13px;font-weight:bold">?</div>
<span class="z" style="left:678px;top:549px;font-size:12px;line-height:12px;width:48px;height:12px">捕捞季节</span>
<span class="z" style="left:678px;top:718.5px;font-size:12px;line-height:12px;width:48px;height:12px">主力追踪</span>
<div class="m" style="left:786px;top:51px;">8.52</div>
<div class="m" style="left:786px;top:94px;">8.22</div>
<div class="m" style="left:786px;top:137px;">7.92</div>
<div class="m" style="left:786px;top:180px;">7.63</div>
<div class="m" style="left:786px;top:223px;">7.33</div>
<div class="m" style="left:786px;top:266px;">7.03</div>
<div class="m" style="left:786px;top:309px;">6.73</div>
<div class="m" style="left:786px;top:352px;">6.43</div>
<div class="m" style="left:786px;top:395px;">6.13</div>
<div class="m" style="left:786px;top:438px;">5.84</div>
<div class="m" style="left:786px;top:481px;">5.54</div>
<div class="m" style="left:786px;top:583px;">1.79</div>
<div class="m" style="left:786px;top:608px;">0.49</div>
<div class="m" style="left:786px;top:633px;">-0.80</div>
<div class="m" style="left:786px;top:658px;">-2.10</div>
<div class="m" style="left:786px;top:683px;">-3.39</div>
<div class="m" style="left:786px;top:752.5px;">573.43</div>
<div class="m" style="left:786px;top:777.5px;">564.73</div>
<div class="m" style="left:786px;top:803.5px;">556.03</div>
<div class="m" style="left:786px;top:828.5px;">547.33</div>
<div class="m" style="left:796px;top:532px;color:#ffffff;">5.20</div>
<div class="m" style="left:715.5px;top:514px;font-size:12px;letter-spacing:-0.7px;">5.31</div>
<div class="b" style="left:973px;top:3px;color:#f8f8a0;font-size:15px;letter-spacing:-0.5px;">600359</div>
<span class="z" style="left:1027px;top:3.8px;font-size:15.4px;line-height:15.4px;width:59px;height:15.4px">新农开发</span>
<span class="z" style="left:854px;top:36px;font-size:12px;line-height:12px;width:24px;height:12px">盘口</span>
<span class="z" style="left:915.5px;top:36px;font-size:12px;line-height:12px;width:24px;height:12px">资金</span>
<span class="z" style="left:976.5px;top:36px;font-size:12px;line-height:12px;width:24px;height:12px">分析</span>
<span class="z" style="left:1037.5px;top:36px;font-size:12px;line-height:12px;width:24px;height:12px">操作</span>
<span class="z" style="left:838px;top:56px;font-size:14px;line-height:14px;width:28px;height:14px">现价</span>
<div class="b r" style="right:170px;top:55px;color:#22f266;">5.35</div>
<span class="z" style="left:943.2px;top:56px;font-size:14px;line-height:14px;width:28px;height:14px">今开</span>
<div class="b r" style="right:61.5px;top:55px;color:#22f266;">5.41</div>
<span class="z" style="left:838px;top:76px;font-size:14px;line-height:14px;width:28px;height:14px">涨跌</span>
<div class="b r" style="right:170px;top:75px;color:#22f266;">-0.11</div>
<span class="z" style="left:943.2px;top:76px;font-size:14px;line-height:14px;width:28px;height:14px">最高</span>
<div class="b r" style="right:61.5px;top:75px;color:#ff5252;">5.48</div>
<span class="z" style="left:838px;top:96px;font-size:14px;line-height:14px;width:28px;height:14px">涨幅</span>
<div class="b r" style="right:170px;top:95px;color:#22f266;">-2.01%</div>
<span class="z" style="left:943.2px;top:96px;font-size:14px;line-height:14px;width:28px;height:14px">最低</span>
<div class="b r" style="right:61.5px;top:95px;color:#22f266;">5.31</div>
<span class="z" style="left:838px;top:116px;font-size:14px;line-height:14px;width:28px;height:14px">总量</span>
<span class="z" style="left:923px;top:116px;font-size:14px;line-height:14px;width:14px;height:14px">万</span>
<div class="b r" style="right:185.5px;top:115px;color:#fafa6e;">3.09</div>
<span class="z" style="left:943.2px;top:116px;font-size:14px;line-height:14px;width:28px;height:14px">量比</span>
<div class="b r" style="right:61.5px;top:115px;color:#c8c8c8;">0.64</div>
<span class="z" style="left:838px;top:136px;font-size:14px;line-height:14px;width:28px;height:14px">外盘</span>
<div class="b r" style="right:170px;top:135px;color:#ff5252;">11020</div>
<span class="z" style="left:943.2px;top:136px;font-size:14px;line-height:14px;width:28px;height:14px">内盘</span>
<div class="b r" style="right:61.5px;top:135px;color:#22f266;">19847</div>
<span class="z" style="left:838px;top:156px;font-size:14px;line-height:14px;width:28px;height:14px">市盈</span>
<div class="b r" style="right:170px;top:155px;color:#c8c8c8;">-</div>
<span class="z" style="left:943.2px;top:156px;font-size:14px;line-height:14px;width:28px;height:14px">股本</span>
<span class="z" style="left:1031.5px;top:156px;font-size:14px;line-height:14px;width:14px;height:14px">亿</span>
<div class="b r" style="right:77.0px;top:155px;color:#c8c8c8;">3.82</div>
<span class="z" style="left:838px;top:176px;font-size:14px;line-height:14px;width:28px;height:14px">换手</span>
<div class="b r" style="right:170px;top:175px;color:#c8c8c8;">0.81%</div>
<span class="z" style="left:943.2px;top:176px;font-size:14px;line-height:14px;width:28px;height:14px">流通</span>
<span class="z" style="left:1031.5px;top:176px;font-size:14px;line-height:14px;width:14px;height:14px">亿</span>
<div class="b r" style="right:77.0px;top:175px;color:#c8c8c8;">3.82</div>
<span class="z" style="left:838px;top:196px;font-size:14px;line-height:14px;width:28px;height:14px">净资</span>
<div class="b r" style="right:170px;top:195px;color:#c8c8c8;">1.80</div>
<span class="z" style="left:943.2px;top:196px;font-size:14px;line-height:14px;width:28px;height:14px">收益</span>
<div class="b r" style="right:61.5px;top:195px;color:#c8c8c8;">-0.022</div>
<span class="z" style="left:978.5px;top:196px;font-size:14px;line-height:14px;width:14px;height:14px">一</span>
<span class="z" style="left:971px;top:196px;font-size:14px;line-height:14px;width:28px;height:14px">(一)</span>
<span class="z" style="left:1058px;top:56px;font-size:14px;line-height:14px;width:28px;height:14px">委比</span>
<div class="b" style="left:1102px;top:55px;color:#c8c8c8;">-</div>
<span class="z" style="left:1058px;top:76px;font-size:14px;line-height:14px;width:42px;height:14px">总卖量</span>
<span class="z" style="left:1058px;top:96px;font-size:14px;line-height:14px;width:28px;height:14px">卖十</span>
<span class="z" style="left:1058px;top:116px;font-size:14px;line-height:14px;width:28px;height:14px">卖九</span>
<span class="z" style="left:1058px;top:136px;font-size:14px;line-height:14px;width:28px;height:14px">卖八</span>
<span class="z" style="left:1058px;top:156px;font-size:14px;line-height:14px;width:28px;height:14px">卖七</span>
<span class="z" style="left:1058px;top:176px;font-size:14px;line-height:14px;width:28px;height:14px">卖六</span>
<span class="z" style="left:1058px;top:196px;font-size:14px;line-height:14px;width:28px;height:14px">卖五</span>
<span class="z" style="left:1058px;top:216px;font-size:14px;line-height:14px;width:28px;height:14px">卖四</span>
<span class="z" style="left:1058px;top:236px;font-size:14px;line-height:14px;width:28px;height:14px">卖三</span>
<span class="z" style="left:1058px;top:256px;font-size:14px;line-height:14px;width:28px;height:14px">卖二</span>
<span class="z" style="left:1058px;top:276px;font-size:14px;line-height:14px;width:28px;height:14px">卖一</span>
<div class="b" style="left:1063px;top:295px;color:#000000;">21%</div>
<span class="z" style="left:1058px;top:316px;font-size:14px;line-height:14px;width:28px;height:14px">买一</span>
<span class="z" style="left:1058px;top:336px;font-size:14px;line-height:14px;width:28px;height:14px">买二</span>
<span class="z" style="left:1058px;top:356px;font-size:14px;line-height:14px;width:28px;height:14px">买三</span>
<span class="z" style="left:1058px;top:376px;font-size:14px;line-height:14px;width:28px;height:14px">买四</span>
<span class="z" style="left:1058px;top:396px;font-size:14px;line-height:14px;width:28px;height:14px">买五</span>
<span class="z" style="left:1058px;top:416px;font-size:14px;line-height:14px;width:28px;height:14px">买六</span>
<span class="z" style="left:1058px;top:436px;font-size:14px;line-height:14px;width:28px;height:14px">买七</span>
<span class="z" style="left:1058px;top:456px;font-size:14px;line-height:14px;width:28px;height:14px">买八</span>
<span class="z" style="left:1058px;top:476px;font-size:14px;line-height:14px;width:28px;height:14px">买九</span>
<span class="z" style="left:1058px;top:496px;font-size:14px;line-height:14px;width:28px;height:14px">买十</span>
<span class="z" style="left:1058px;top:516px;font-size:14px;line-height:14px;width:42px;height:14px">总买量</span>
<div class="b" style="left:1057px;top:564px;color:#c8c8c8;">14:53</div>
<div class="b" style="left:1057px;top:584px;color:#c8c8c8;">14:53</div>
<div class="b" style="left:1057px;top:604px;color:#c8c8c8;">14:54</div>
<div class="b" style="left:1057px;top:624px;color:#c8c8c8;">14:54</div>
<div class="b" style="left:1057px;top:644px;color:#c8c8c8;">14:54</div>
<div class="b" style="left:1057px;top:664px;color:#c8c8c8;">14:54</div>
<div class="b" style="left:1057px;top:684px;color:#c8c8c8;">14:54</div>
<div class="b" style="left:1057px;top:704px;color:#c8c8c8;">14:54</div>
<div class="b" style="left:1057px;top:724px;color:#c8c8c8;">14:54</div>
<div class="b" style="left:1057px;top:744px;color:#c8c8c8;">14:54</div>
<div class="b" style="left:1057px;top:764px;color:#c8c8c8;">14:54</div>
<div class="b" style="left:1057px;top:784px;color:#c8c8c8;">14:54</div>
<div class="b" style="left:1057px;top:804px;color:#c8c8c8;">14:54</div>
<div class="b" style="left:1057px;top:824px;color:#c8c8c8;">14:55</div>
<div class="b" style="left:1057px;top:844px;color:#c8c8c8;">14:55</div>
<span class="z" style="left:899px;top:218px;font-size:12px;line-height:12px;width:48px;height:12px">逐笔成交</span>
<div class="m" style="left:1020px;top:218px;color:#c8c8c8;">[</div>
<span class="z" style="left:1025.5px;top:218px;font-size:12px;line-height:12px;width:12px;height:12px">详</span>
<div class="m" style="left:1037.5px;top:218px;color:#c8c8c8;">]</div>
<div class="b r" style="right:201px;top:243px;color:#c8c8c8;">14:53:45</div>
<div class="b" style="left:932px;top:243px;color:#22f266;">5.35</div>
<div class="b r" style="right:80px;top:243px;color:#fafa6e;">3</div>
<div class="b" style="left:1033px;top:243px;color:#ff5252;">B</div>
<div class="b r" style="right:201px;top:263px;color:#fafa6e;">2</div>
<div class="b" style="left:932px;top:263px;color:#22f266;">5.35</div>
<div class="b r" style="right:80px;top:263px;color:#fafa6e;">10</div>
<div class="b" style="left:1033px;top:263px;color:#ff5252;">B</div>
<div class="b r" style="right:201px;top:283px;color:#fafa6e;">3</div>
<div class="b" style="left:932px;top:283px;color:#22f266;">5.36</div>
<div class="b r" style="right:80px;top:283px;color:#fafa6e;">10</div>
<div class="b" style="left:1033px;top:283px;color:#ff5252;">B</div>
<div class="b r" style="right:201px;top:303px;color:#fafa6e;">4</div>
<div class="b" style="left:932px;top:303px;color:#22f266;">5.36</div>
<div class="b r" style="right:80px;top:303px;color:#fafa6e;">10</div>
<div class="b" style="left:1033px;top:303px;color:#ff5252;">B</div>
<div class="b r" style="right:201px;top:323px;color:#fafa6e;">5</div>
<div class="b" style="left:932px;top:323px;color:#22f266;">5.36</div>
<div class="b r" style="right:80px;top:323px;color:#fafa6e;">17</div>
<div class="b" style="left:1033px;top:323px;color:#ff5252;">B</div>
<div class="b r" style="right:201px;top:343px;color:#c8c8c8;">14:53:53</div>
<div class="b" style="left:932px;top:343px;color:#22f266;">5.34</div>
<div class="b r" style="right:80px;top:343px;color:#fafa6e;">5</div>
<div class="b" style="left:1033px;top:343px;color:#22f266;">S</div>
<div class="b r" style="right:201px;top:363px;color:#c8c8c8;">14:54:00</div>
<div class="b" style="left:932px;top:363px;color:#22f266;">5.35</div>
<div class="b r" style="right:80px;top:363px;color:#fafa6e;">15</div>
<div class="b" style="left:1033px;top:363px;color:#ff5252;">B</div>
<div class="b r" style="right:201px;top:383px;color:#c8c8c8;">14:54:09</div>
<div class="b" style="left:932px;top:383px;color:#22f266;">5.36</div>
<div class="b r" style="right:80px;top:383px;color:#fafa6e;">6</div>
<div class="b" style="left:1033px;top:383px;color:#ff5252;">B</div>
<div class="b r" style="right:201px;top:403px;color:#c8c8c8;">14:54:11</div>
<div class="b" style="left:932px;top:403px;color:#22f266;">5.35</div>
<div class="b r" style="right:80px;top:403px;color:#fafa6e;">25</div>
<div class="b" style="left:1033px;top:403px;color:#22f266;">S</div>
<div class="b r" style="right:201px;top:423px;color:#c8c8c8;">14:54:14</div>
<div class="b" style="left:932px;top:423px;color:#22f266;">5.35</div>
<div class="b r" style="right:80px;top:423px;color:#fafa6e;">3</div>
<div class="b" style="left:1033px;top:423px;color:#22f266;">S</div>
<div class="b r" style="right:201px;top:443px;color:#c8c8c8;">14:54:21</div>
<div class="b" style="left:932px;top:443px;color:#22f266;">5.35</div>
<div class="b r" style="right:80px;top:443px;color:#fafa6e;">1</div>
<div class="b" style="left:1033px;top:443px;color:#22f266;">S</div>
<div class="b r" style="right:201px;top:463px;color:#fafa6e;">2</div>
<div class="b" style="left:932px;top:463px;color:#22f266;">5.36</div>
<div class="b r" style="right:80px;top:463px;color:#fafa6e;">27</div>
<div class="b" style="left:1033px;top:463px;color:#ff5252;">B</div>
<div class="b r" style="right:201px;top:483px;color:#fafa6e;">3</div>
<div class="b" style="left:932px;top:483px;color:#22f266;">5.36</div>
<div class="b r" style="right:80px;top:483px;color:#fafa6e;">43</div>
<div class="b" style="left:1033px;top:483px;color:#ff5252;">B</div>
<div class="b r" style="right:201px;top:503px;color:#c8c8c8;">14:54:22</div>
<div class="b" style="left:932px;top:503px;color:#22f266;">5.35</div>
<div class="b r" style="right:80px;top:503px;color:#fafa6e;">4</div>
<div class="b" style="left:1033px;top:503px;color:#22f266;">S</div>
<div class="b r" style="right:201px;top:523px;color:#c8c8c8;">14:54:26</div>
<div class="b" style="left:932px;top:523px;color:#22f266;">5.35</div>
<div class="b r" style="right:80px;top:523px;color:#fafa6e;">52</div>
<div class="b" style="left:1033px;top:523px;color:#22f266;">S</div>
<div class="b r" style="right:201px;top:543px;color:#c8c8c8;">14:54:30</div>
<div class="b" style="left:932px;top:543px;color:#22f266;">5.35</div>
<div class="b r" style="right:80px;top:543px;color:#fafa6e;">2</div>
<div class="b" style="left:1033px;top:543px;color:#22f266;">S</div>
<div class="b r" style="right:201px;top:563px;color:#fafa6e;">2</div>
<div class="b" style="left:932px;top:563px;color:#22f266;">5.35</div>
<div class="b r" style="right:80px;top:563px;color:#fafa6e;">6</div>
<div class="b" style="left:1033px;top:563px;color:#22f266;">S</div>
<div class="b r" style="right:201px;top:583px;color:#fafa6e;">3</div>
<div class="b" style="left:932px;top:583px;color:#22f266;">5.35</div>
<div class="b r" style="right:80px;top:583px;color:#fafa6e;">10</div>
<div class="b" style="left:1033px;top:583px;color:#22f266;">S</div>
<div class="b r" style="right:201px;top:603px;color:#fafa6e;">4</div>
<div class="b" style="left:932px;top:603px;color:#22f266;">5.35</div>
<div class="b r" style="right:80px;top:603px;color:#fafa6e;">1</div>
<div class="b" style="left:1033px;top:603px;color:#22f266;">S</div>
<div class="b r" style="right:201px;top:623px;color:#c8c8c8;">14:54:34</div>
<div class="b" style="left:932px;top:623px;color:#22f266;">5.36</div>
<div class="b r" style="right:80px;top:623px;color:#fafa6e;">2</div>
<div class="b" style="left:1033px;top:623px;color:#ff5252;">B</div>
<div class="b r" style="right:201px;top:643px;color:#c8c8c8;">14:54:41</div>
<div class="b" style="left:932px;top:643px;color:#22f266;">5.36</div>
<div class="b r" style="right:80px;top:643px;color:#fafa6e;">5</div>
<div class="b" style="left:1033px;top:643px;color:#ff5252;">B</div>
<div class="b r" style="right:201px;top:663px;color:#fafa6e;">2</div>
<div class="b" style="left:932px;top:663px;color:#22f266;">5.36</div>
<div class="b r" style="right:80px;top:663px;color:#fafa6e;">16</div>
<div class="b" style="left:1033px;top:663px;color:#ff5252;">B</div>
<div class="b r" style="right:201px;top:683px;color:#fafa6e;">3</div>
<div class="b" style="left:932px;top:683px;color:#22f266;">5.36</div>
<div class="b r" style="right:80px;top:683px;color:#fafa6e;">30</div>
<div class="b" style="left:1033px;top:683px;color:#ff5252;">B</div>
<div class="b r" style="right:201px;top:703px;color:#fafa6e;">4</div>
<div class="b" style="left:932px;top:703px;color:#22f266;">5.35</div>
<div class="b r" style="right:80px;top:703px;color:#fafa6e;">10</div>
<div class="b" style="left:1033px;top:703px;color:#22f266;">S</div>
<div class="b r" style="right:201px;top:723px;color:#c8c8c8;">14:54:44</div>
<div class="b" style="left:932px;top:723px;color:#22f266;">5.36</div>
<div class="b r" style="right:80px;top:723px;color:#fafa6e;">18</div>
<div class="b" style="left:1033px;top:723px;color:#ff5252;">B</div>
<div class="b r" style="right:201px;top:743px;color:#fafa6e;">2</div>
<div class="b" style="left:932px;top:743px;color:#22f266;">5.36</div>
<div class="b r" style="right:80px;top:743px;color:#fafa6e;">4</div>
<div class="b" style="left:1033px;top:743px;color:#ff5252;">B</div>
<div class="b r" style="right:201px;top:763px;color:#fafa6e;">3</div>
<div class="b" style="left:932px;top:763px;color:#22f266;">5.36</div>
<div class="b r" style="right:80px;top:763px;color:#fafa6e;">6</div>
<div class="b" style="left:1033px;top:763px;color:#ff5252;">B</div>
<div class="b r" style="right:201px;top:783px;color:#fafa6e;">4</div>
<div class="b" style="left:932px;top:783px;color:#22f266;">5.36</div>
<div class="b r" style="right:80px;top:783px;color:#fafa6e;">20</div>
<div class="b" style="left:1033px;top:783px;color:#ff5252;">B</div>
<div class="b r" style="right:201px;top:803px;color:#c8c8c8;">14:54:53</div>
<div class="b" style="left:932px;top:803px;color:#22f266;">5.35</div>
<div class="b r" style="right:80px;top:803px;color:#fafa6e;">9</div>
<div class="b" style="left:1033px;top:803px;color:#22f266;">S</div>
<div class="b r" style="right:201px;top:823px;color:#fafa6e;">2</div>
<div class="b" style="left:932px;top:823px;color:#22f266;">5.35</div>
<div class="b r" style="right:80px;top:823px;color:#fafa6e;">10</div>
<div class="b" style="left:1033px;top:823px;color:#22f266;">S</div>
<div class="b r" style="right:201px;top:843px;color:#fafa6e;">3</div>
<div class="b" style="left:932px;top:843px;color:#22f266;">5.35</div>
<div class="b r" style="right:80px;top:843px;color:#fafa6e;">2</div>
<div class="b" style="left:1033px;top:843px;color:#22f266;">S</div>
</div>
</body></html>
